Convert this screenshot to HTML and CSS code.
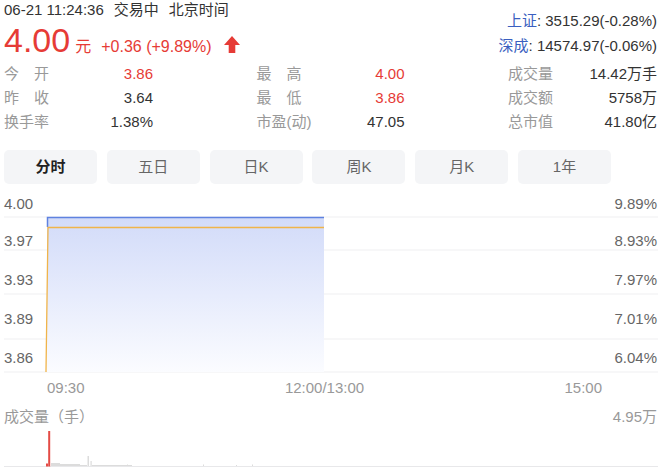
FILE: index.html
```html
<!DOCTYPE html>
<html lang="zh-CN">
<head>
<meta charset="utf-8">
<title>分时</title>
<link rel="stylesheet" href="styles.css">
</head>
<body>
<div class="top">
  <div class="head">
    <div class="head-left">
      <div class="status"><span>06-21 11:24:36</span><span class="gap">交易中</span><span class="gap">北京时间</span></div>
      <div class="quote"><span class="price">4.00</span><span class="unit">元</span><span class="chg">+0.36 (+9.89%)</span><svg class="arrow" viewBox="0 0 16 17"><path d="M8 0 L16 9 L11.3 9 L11.3 17 L4.7 17 L4.7 9 L0 9 Z" fill="#e63b36"/></svg></div>
    </div>
    <div class="index">
      <div><span class="idx-name">上证</span>: 3515.29(-0.28%)</div>
      <div><span class="idx-name">深成</span>: 14574.97(-0.06%)</div>
    </div>
  </div>
  <div class="stats">
    <div class="cell"><span class="label j">今开</span><span class="val red">3.86</span></div>
    <div class="cell"><span class="label j">最高</span><span class="val red">4.00</span></div>
    <div class="cell"><span class="label">成交量</span><span class="val">14.42万手</span></div>
    <div class="cell"><span class="label j">昨收</span><span class="val">3.64</span></div>
    <div class="cell"><span class="label j">最低</span><span class="val red">3.86</span></div>
    <div class="cell"><span class="label">成交额</span><span class="val">5758万</span></div>
    <div class="cell"><span class="label">换手率</span><span class="val">1.38%</span></div>
    <div class="cell"><span class="label">市盈(动)</span><span class="val">47.05</span></div>
    <div class="cell"><span class="label">总市值</span><span class="val">41.80亿</span></div>
  </div>
  <div class="tabs">
    <div class="tab active">分时</div>
    <div class="tab">五日</div>
    <div class="tab">日K</div>
    <div class="tab">周K</div>
    <div class="tab">月K</div>
    <div class="tab">1年</div>
  </div>
</div>
<svg class="chart" viewBox="0 184 662 287" width="662" height="287">
  <defs>
    <linearGradient id="fill" x1="0" y1="0" x2="0" y2="1">
      <stop offset="0" stop-color="#d2dbf9"/>
      <stop offset="1" stop-color="#fbfcff"/>
    </linearGradient>
  </defs>
  <g class="grid">
    <line x1="4" y1="217" x2="658" y2="217"/>
    <line x1="4" y1="250" x2="658" y2="250"/>
    <line x1="4" y1="294" x2="658" y2="294"/>
    <line x1="4" y1="339" x2="658" y2="339"/>
    <line x1="4" y1="372" x2="658" y2="372"/>
  </g>
  <rect x="47" y="217" width="277" height="155" fill="url(#fill)"/>
  <polyline points="47.5,227 47.5,217.5 324,217.5" fill="none" stroke="#5f82e0" stroke-width="1.5"/>
  <polyline points="46,372 48,227.5 324,227.5" fill="none" stroke="#f0b44a" stroke-width="1.3"/>
  <g class="ylab">
    <text x="4" y="208.5">4.00</text>
    <text x="4" y="245.5">3.97</text>
    <text x="4" y="285">3.93</text>
    <text x="4" y="324">3.89</text>
    <text x="4" y="362.5">3.86</text>
  </g>
  <g class="ylab right">
    <text x="657" y="208.5">9.89%</text>
    <text x="657" y="245.5">8.93%</text>
    <text x="657" y="285">7.97%</text>
    <text x="657" y="324">7.01%</text>
    <text x="657" y="362.5">6.04%</text>
  </g>
  <g class="tlab">
    <text x="47" y="393">09:30</text>
    <text x="324.5" y="393" text-anchor="middle">12:00/13:00</text>
    <text x="602" y="393" text-anchor="end">15:00</text>
  </g>
  <text class="vlab" x="4" y="422">成交量（手）</text>
  <text class="vlab" x="657" y="422" text-anchor="end">4.95万</text>
  <line class="base" x1="4" y1="466.5" x2="658" y2="466.5"/>
  <g class="vol">
    <rect x="51" y="463" width="9" height="3"/>
    <rect x="60" y="464" width="20" height="2"/>
    <rect x="87.5" y="456" width="1.5" height="10"/>
    <rect x="90.5" y="461" width="1.2" height="5"/>
    <rect x="80" y="465" width="7" height="1"/>
    <rect x="92" y="465" width="40" height="1"/>
    <rect x="127" y="464.5" width="1" height="1.5"/>
    <rect x="203" y="464.5" width="1" height="1.5"/>
    <rect x="236" y="465" width="1" height="1"/>
    <rect x="252" y="464.5" width="1" height="1.5"/>
  </g>
  <rect x="46" y="463.5" width="2" height="3" fill="#e44b45"/>
  <rect x="48.2" y="431" width="2" height="35.5" fill="#e44b45"/>
</svg>
</body>
</html>
```

FILE: styles.css
```css
body {
  margin: 0;
  background: #fff;
  color: #333;
  font-family: "Liberation Sans", "Noto Sans CJK SC", sans-serif;
}

.top {
  padding: 0 5px 0 4px;
}

.head {
  display: flex;
  justify-content: space-between;
}

.status {
  font-size: 15px;
  line-height: 20px;
  height: 20px;
  white-space: nowrap;
}

.gap {
  margin-left: 10px;
}

.quote {
  height: 40px;
  line-height: 40px;
  white-space: nowrap;
  color: #e63b36;
}

.price {
  font-size: 34px;
}

.unit {
  font-size: 16px;
  line-height: 16px;
  margin-left: 5px;
}

.chg {
  font-size: 16px;
  line-height: 16px;
  margin-left: 10px;
}

.arrow {
  width: 16px;
  height: 17px;
  margin-left: 12px;
  vertical-align: -1px;
}

.index {
  padding-top: 8px;
  font-size: 15px;
  line-height: 25px;
  text-align: right;
  white-space: nowrap;
}

.idx-name {
  color: #3a5fc0;
}

.stats {
  display: grid;
  grid-template-columns: 149px 148px 149px;
  grid-auto-rows: 24px;
  justify-content: space-between;
  margin-top: 2px;
  font-size: 15px;
  line-height: 24px;
}

.cell {
  display: flex;
  justify-content: space-between;
  white-space: nowrap;
}

.label {
  color: #999;
}

.label.j {
  width: 45px;
  text-align: justify;
  text-align-last: justify;
}

.val {
  color: #333;
}

.val.red {
  color: #e63b36;
}

.tabs {
  display: grid;
  grid-template-columns: repeat(6, 93px);
  column-gap: 9.8px;
  margin-top: 16px;
}

.tab {
  height: 34px;
  line-height: 34px;
  background: #f4f5f7;
  border-radius: 5px;
  text-align: center;
  font-size: 15px;
  color: #666;
}

.tab.active {
  color: #222;
  font-weight: bold;
}

.chart {
  display: block;
}

.grid line {
  stroke: #efeff1;
  stroke-width: 1;
}

.ylab text {
  font-size: 15px;
  fill: #666;
  font-family: "Liberation Sans", "Noto Sans CJK SC", sans-serif;
}

.ylab.right text {
  text-anchor: end;
}

.tlab text {
  font-size: 15px;
  fill: #999;
  font-family: "Liberation Sans", "Noto Sans CJK SC", sans-serif;
}

.vlab {
  font-size: 15px;
  fill: #999;
  font-family: "Liberation Sans", "Noto Sans CJK SC", sans-serif;
}

.base {
  stroke: #e8e8ea;
  stroke-width: 1;
}

.vol rect {
  fill: #dcdcdc;
}
```
